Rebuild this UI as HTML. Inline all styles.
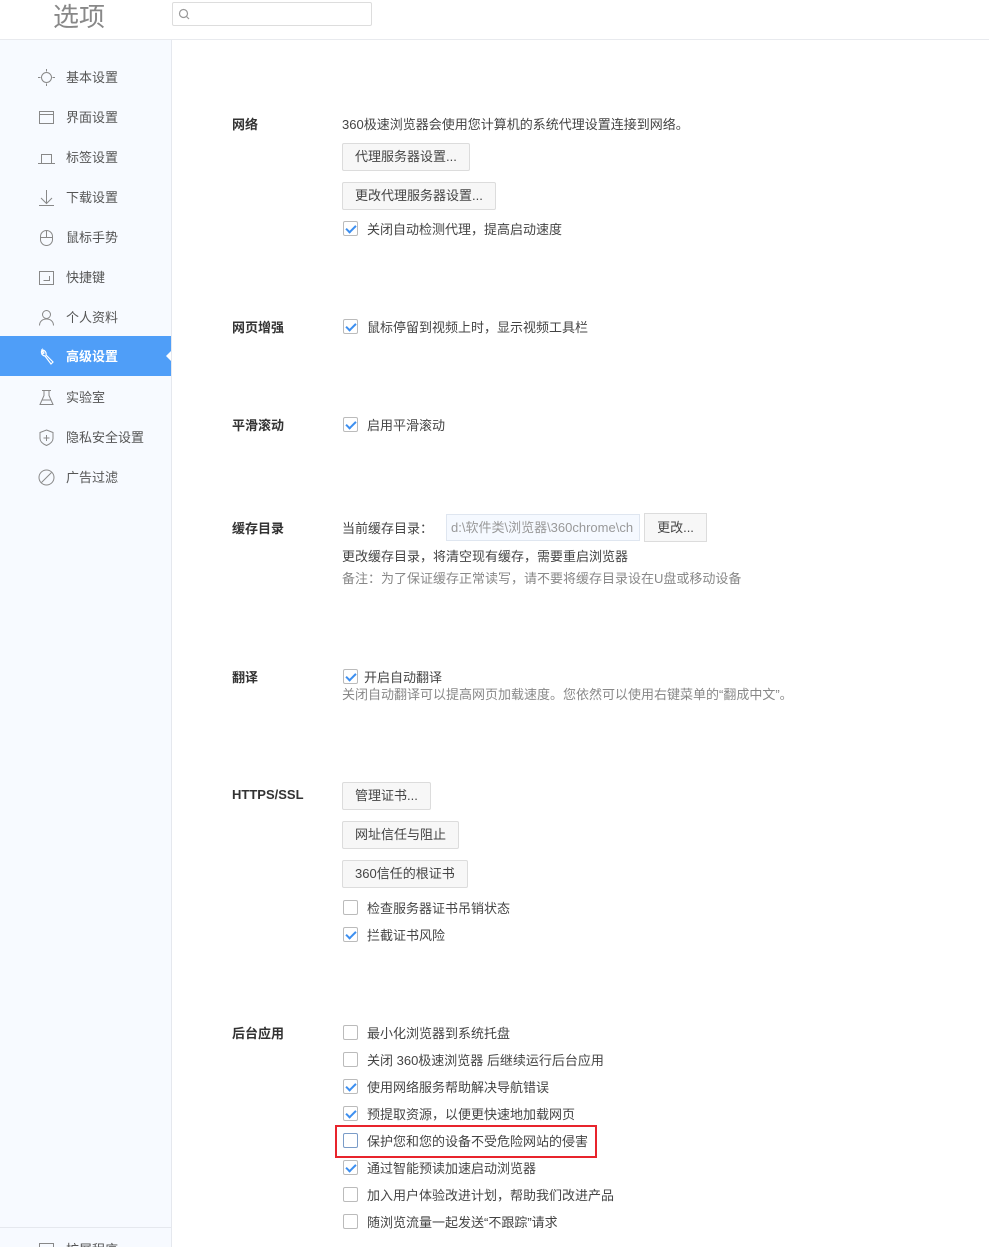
<!DOCTYPE html>
<html><head><meta charset="utf-8"><style>
*{margin:0;padding:0;box-sizing:border-box}
html,body{width:989px;height:1247px;overflow:hidden}
body{background:#fff;font-family:"Liberation Sans","Noto Sans CJK SC",sans-serif;font-size:13px;color:#333;position:relative}
.a{position:absolute;white-space:nowrap}
#hdr{position:absolute;left:0;top:0;width:989px;height:40px;border-bottom:1px solid #e8eaee;background:#fff}
#side{position:absolute;left:0;top:40px;width:172px;height:1207px;background:#f7faff;border-right:1px solid #e5e8ee;overflow:hidden}
.nav{position:absolute;left:0;width:172px;height:40px;line-height:40px;color:#555;font-size:13px}
.nav span{position:absolute;left:66px;top:1px}
.nav svg{position:absolute;left:38px;top:12px}
.act{background:#4f9ef8;color:#fff;font-weight:bold}
.lbl{position:absolute;left:232px;font-weight:bold;color:#333;font-size:13px;margin-top:-1px}
.btn{position:absolute;left:342px;height:28px;line-height:26px;border:1px solid #dcdcdc;background:#f7f7f7;border-radius:2px;padding:0 12px;color:#444;font-size:13px}
.cb{position:absolute;left:343px;width:15px;height:15px;border:1px solid #bbb;border-radius:2px;background:#fff}
.cb.c::after{content:"";position:absolute;left:4px;top:1px;width:4px;height:8px;border:solid #3d8ff0;border-width:0 2px 2px 0;transform:rotate(45deg)}
.t{position:absolute;left:367px;color:#444;margin-top:-1px}
.m{margin-top:-1px}
</style></head><body>
<div id="hdr">
<div class="a" style="left:53px;top:-3px;font-size:26px;color:#888">选项</div>
<div class="a" style="left:172px;top:2px;width:200px;height:24px;border:1px solid #ddd;border-radius:2px"></div>
<svg class="a" style="left:178px;top:8px" width="12" height="12"><circle cx="5.5" cy="5.5" r="4" fill="none" stroke="#999" stroke-width="1.2"/><line x1="8.5" y1="8.5" x2="11" y2="11" stroke="#999" stroke-width="1.2"/></svg>
</div>
<div id="side">
<div class="nav" style="top:17px"><svg width="17" height="17"><circle cx="8.5" cy="8.5" r="5" fill="none" stroke="#888"/><g stroke="#888"><line x1="8.5" y1="0" x2="8.5" y2="2.5"/><line x1="8.5" y1="14.5" x2="8.5" y2="17"/><line x1="0" y1="8.5" x2="2.5" y2="8.5"/><line x1="14.5" y1="8.5" x2="17" y2="8.5"/></g></svg><span>基本设置</span></div>
<div class="nav" style="top:57px"><svg width="17" height="17"><rect x="1.5" y="2.5" width="14" height="12" fill="none" stroke="#888"/><line x1="1.5" y1="5.5" x2="15.5" y2="5.5" stroke="#888"/></svg><span>界面设置</span></div>
<div class="nav" style="top:97px"><svg width="17" height="17"><path d="M3.5 14V5.5h10V14M0 14.5h17" fill="none" stroke="#888"/></svg><span>标签设置</span></div>
<div class="nav" style="top:137px"><svg width="17" height="17"><path d="M8.5 1v13M3 9l5.5 5.5L14 9M1 16.5h15" fill="none" stroke="#888"/></svg><span>下载设置</span></div>
<div class="nav" style="top:177px"><svg width="17" height="17"><rect x="2.5" y="1.5" width="12" height="15" rx="6" fill="none" stroke="#888"/><path d="M2.5 8.5h12M8.5 1.5v7" stroke="#888"/></svg><span>鼠标手势</span></div>
<div class="nav" style="top:217px"><svg width="17" height="17"><rect x="1.5" y="2.5" width="14" height="13" fill="none" stroke="#888"/><path d="M11.5 7v4.5h-6" fill="none" stroke="#888"/></svg><span>快捷键</span></div>
<div class="nav" style="top:257px"><svg width="17" height="17"><circle cx="8.5" cy="5.5" r="4" fill="none" stroke="#888"/><path d="M1.5 16.5c0-4 3-6.5 7-6.5s7 2.5 7 6.5" fill="none" stroke="#888"/></svg><span>个人资料</span></div>
<div class="nav act" style="top:296px"><svg width="17" height="17"><path d="M4 2a4 4 0 0 0 3 6l6 8 2-2-7-7a4 4 0 0 0-4-5l2 3-2 1z" fill="none" stroke="#fff" stroke-width="1.2"/></svg><span>高级设置</span>
<div class="a" style="left:166px;top:14px;width:0;height:0;border-top:6px solid transparent;border-bottom:6px solid transparent;border-right:6px solid #fff"></div></div>
<div class="nav" style="top:337px"><svg width="17" height="17"><path d="M4 1.5h9M6 1.5v5L2 15.5h13L11 6.5v-5M4 11h9" fill="none" stroke="#888"/></svg><span>实验室</span></div>
<div class="nav" style="top:377px"><svg width="17" height="17"><path d="M8.5 1L15 3.5v6c0 3-3 5.5-6.5 7C5 15 2 12.5 2 9.5v-6z" fill="none" stroke="#888"/><path d="M8.5 6v6M5.5 9h6" stroke="#888"/></svg><span>隐私安全设置</span></div>
<div class="nav" style="top:417px"><svg width="17" height="17"><circle cx="8.5" cy="8.5" r="7.5" fill="none" stroke="#888"/><line x1="3.5" y1="13.5" x2="13.5" y2="3.5" stroke="#888"/></svg><span>广告过滤</span></div>
<div class="a" style="left:0;top:1187px;width:171px;border-top:1px solid #e5e8ee"></div>
<div class="nav" style="top:1189px"><svg width="17" height="17"><rect x="1.5" y="2.5" width="14" height="12" fill="none" stroke="#888"/></svg><span>扩展程序</span></div>
</div>

<div class="lbl" style="top:115px">网络</div>
<div class="a m" style="left:342px;top:115px;color:#444">360极速浏览器会使用您计算机的系统代理设置连接到网络。</div>
<div class="btn" style="top:143px">代理服务器设置...</div>
<div class="btn" style="top:182px">更改代理服务器设置...</div>
<div class="cb c" style="top:221px"></div><div class="t" style="top:220px">关闭自动检测代理，提高启动速度</div>

<div class="lbl" style="top:318px">网页增强</div>
<div class="cb c" style="top:319px"></div><div class="t" style="top:318px">鼠标停留到视频上时，显示视频工具栏</div>

<div class="lbl" style="top:416px">平滑滚动</div>
<div class="cb c" style="top:417px"></div><div class="t" style="top:416px">启用平滑滚动</div>

<div class="lbl" style="top:519px">缓存目录</div>
<div class="a m" style="left:342px;top:519px;color:#444">当前缓存目录：</div>
<div class="a" style="left:446px;top:514px;width:194px;height:27px;border:1px solid #dfe6f0;background:#f5f9ff;color:#999;line-height:26px;padding-left:4px;overflow:hidden">d:\软件类\浏览器\360chrome\ch</div>
<div class="a" style="left:644px;top:513px;width:63px;height:29px;border:1px solid #dcdcdc;background:#f7f7f7;line-height:28px;text-align:center;color:#444">更改...</div>
<div class="a m" style="left:342px;top:547px;color:#444">更改缓存目录，将清空现有缓存，需要重启浏览器</div>
<div class="a m" style="left:342px;top:569px;color:#888">备注：为了保证缓存正常读写，请不要将缓存目录设在U盘或移动设备</div>

<div class="lbl" style="top:668px">翻译</div>
<div class="cb c" style="top:669px"></div><div class="t" style="left:364px;top:668px">开启自动翻译</div>
<div class="a m" style="left:342px;top:685px;color:#888">关闭自动翻译可以提高网页加载速度。您依然可以使用右键菜单的“翻成中文”。</div>

<div class="lbl" style="top:788px">HTTPS/SSL</div>
<div class="btn" style="top:782px">管理证书...</div>
<div class="btn" style="top:821px">网址信任与阻止</div>
<div class="btn" style="top:860px">360信任的根证书</div>
<div class="cb" style="top:900px"></div><div class="t" style="top:899px">检查服务器证书吊销状态</div>
<div class="cb c" style="top:927px"></div><div class="t" style="top:926px">拦截证书风险</div>

<div class="lbl" style="top:1024px">后台应用</div>
<div class="cb" style="top:1025px"></div><div class="t" style="top:1024px">最小化浏览器到系统托盘</div>
<div class="cb" style="top:1052px"></div><div class="t" style="top:1051px">关闭 360极速浏览器 后继续运行后台应用</div>
<div class="cb c" style="top:1079px"></div><div class="t" style="top:1078px">使用网络服务帮助解决导航错误</div>
<div class="cb c" style="top:1106px"></div><div class="t" style="top:1105px">预提取资源，以便更快速地加载网页</div>
<div class="a" style="left:335px;top:1125px;width:262px;height:33px;border:2px solid #e8242c"></div>
<div class="cb" style="top:1133px;border-color:#7a9cc8"></div><div class="t" style="top:1132px">保护您和您的设备不受危险网站的侵害</div>
<div class="cb c" style="top:1160px"></div><div class="t" style="top:1159px">通过智能预读加速启动浏览器</div>
<div class="cb" style="top:1187px"></div><div class="t" style="top:1186px">加入用户体验改进计划，帮助我们改进产品</div>
<div class="cb" style="top:1214px"></div><div class="t" style="top:1213px">随浏览流量一起发送“不跟踪”请求</div>
</body></html>
